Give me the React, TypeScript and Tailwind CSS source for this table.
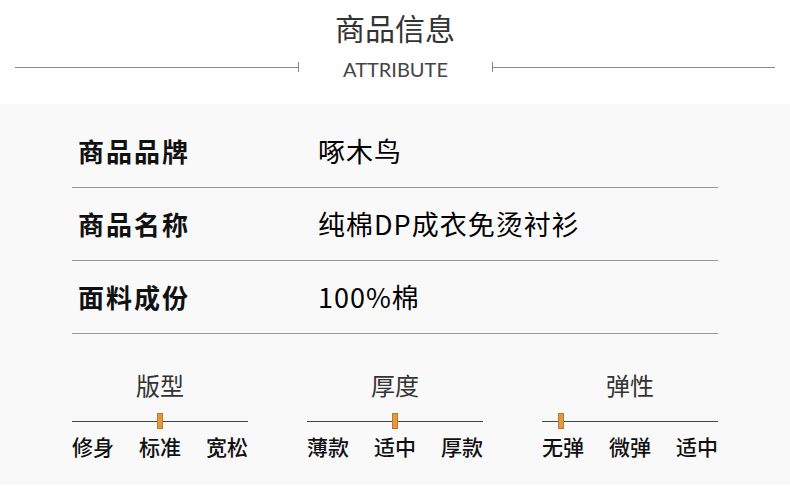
import React from "react";

const rows = [
  { label: "商品品牌", value: "啄木鸟" },
  { label: "商品名称", value: "纯棉DP成衣免烫衬衫" },
  { label: "面料成份", value: "100%棉" },
];

const scales = [
  { title: "版型", marks: ["修身", "标准", "宽松"], pos: 85 },
  { title: "厚度", marks: ["薄款", "适中", "厚款"], pos: 85 },
  { title: "弹性", marks: ["无弹", "微弹", "适中"], pos: 16 },
];

function Scale({ title, marks, pos }: { title: string; marks: string[]; pos: number }) {
  return (
    <div className="w-[176px] flex flex-col">
      <div className="text-center text-[24px] leading-[30px] text-[#333]">{title}</div>
      {/* slider track + marker */}
      <div className="relative h-[16px] mt-[13px] flex items-center">
        <div className="w-full h-px bg-[#444]" />
        <div
          className="absolute top-0 w-[6px] h-[16px] bg-[#e39a3e] border border-[#b97a2e]"
          style={{ left: pos }}
        />
      </div>
      <div className="mt-[5px] flex justify-between text-[21px] leading-[24px] font-medium text-[#111]">
        {marks.map((m) => (
          <span key={m}>{m}</span>
        ))}
      </div>
    </div>
  );
}

export default function App() {
  return (
    <div className="w-[790px] h-[501px] bg-white overflow-hidden font-['Noto_Sans_CJK_SC','Noto_Sans',sans-serif]">
      {/* header */}
      <div className="pt-[9px]">
        <h1 className="text-center text-[30px] leading-[36px] font-normal text-[#333]">商品信息</h1>
        <div className="mt-[12px] h-[24px] flex items-center">
          <div className="ml-[15px] w-[284px] mb-[4px] flex items-center">
            <div className="flex-1 h-px bg-[#888]" />
            <div className="w-px h-[10px] bg-[#888]" />
          </div>
          <div className="flex-1 text-center font-['Lato',sans-serif] text-[20px] leading-[24px] text-[#444]">
            ATTRIBUTE
          </div>
          <div className="mr-[15px] w-[283px] mb-[4px] flex items-center">
            <div className="w-px h-[10px] bg-[#888]" />
            <div className="flex-1 h-px bg-[#888]" />
          </div>
        </div>
      </div>

      {/* attributes */}
      <div className="mt-[23px] h-[381px] bg-[#f9f9f9] px-[72px] pt-[11px]">
        {rows.map((r) => (
          <div key={r.label} className="h-[73px] flex items-center border-b border-[#999]">
            <div className="w-[246px] pl-[6px] text-[26px] leading-[32px] tracking-[2px] font-bold text-[#111]">
              {r.label}
            </div>
            <div className="text-[27px] leading-[32px] tracking-[1px] text-black">{r.value}</div>
          </div>
        ))}

        <div className="mt-[36px] flex justify-between">
          {scales.map((s) => (
            <Scale key={s.title} {...s} />
          ))}
        </div>
      </div>
    </div>
  );
}
